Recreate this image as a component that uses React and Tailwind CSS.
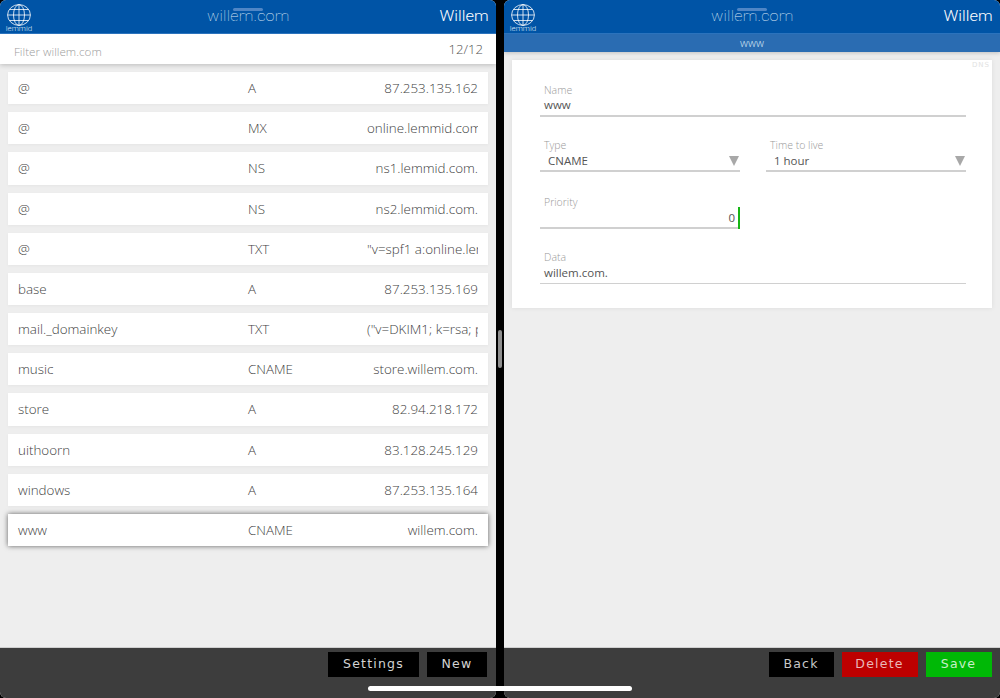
const records = [
  ["@", "A", "87.253.135.162"],
  ["@", "MX", "online.lemmid.com."],
  ["@", "NS", "ns1.lemmid.com."],
  ["@", "NS", "ns2.lemmid.com."],
  ["@", "TXT", "\"v=spf1 a:online.lemmid.com -all\""],
  ["base", "A", "87.253.135.169"],
  ["mail._domainkey", "TXT", "(\"v=DKIM1; k=rsa; p=MIGfMA0GCSq"],
  ["music", "CNAME", "store.willem.com."],
  ["store", "A", "82.94.218.172"],
  ["uithoorn", "A", "83.128.245.129"],
  ["windows", "A", "87.253.135.164"],
  ["www", "CNAME", "willem.com."],
];

const Globe = () => (
  <svg width="24" height="22" viewBox="0 0 24 22" fill="none" stroke="white" strokeWidth="0.8" className="block">
    <ellipse cx="12" cy="11" rx="11.4" ry="10.4" />
    <ellipse cx="12" cy="11" rx="5.5" ry="10.4" />
    <path d="M12 .6v20.8M.6 11h22.8M2.6 5.5h18.8M2.6 16.5h18.8" />
  </svg>
);

const Header = () => (
  <div className="relative flex h-[34px] items-center justify-between border-b border-[#2b73bd] bg-[#0054a6] pl-[7px] pr-[7px] text-white">
    <div className="flex w-[24px] flex-col items-center pt-[3px]">
      <Globe />
      <span className="mt-[-1px] font-['Roboto',sans-serif] text-[8px] leading-[8px] font-light text-[#dce8f5]">lemmid</span>
    </div>
    <span className="absolute left-[207px] top-[7px] origin-left scale-x-[1.05] font-['Roboto',sans-serif] text-[15.5px] leading-[19px] font-thin tracking-[0.2px] text-[#dbe7f4]">
      willem.com
    </span>
    <div className="absolute left-[233px] top-[8px] h-[3px] w-[30px] rounded-full bg-[#4f86c6]" />
    <span className="origin-right scale-x-[1.1] font-['Roboto',sans-serif] text-[15px] leading-[19px] font-light">Willem</span>
  </div>
);

const ActionButton = ({ label, className }) => (
  <button className={`flex h-[25px] items-center justify-center font-['DejaVu_Sans',sans-serif] text-[12.5px] font-normal tracking-[1.2px] ${className}`}>
    {label}
  </button>
);

const Field = ({ label, className, children }) => (
  <div className={className}>
    <div className="pl-[4px] font-['Open_Sans',sans-serif] text-[10.5px] leading-[14px] font-light text-[#9a9a9a]">{label}</div>
    {children}
  </div>
);

const Caret = () => <div className="h-0 w-0 border-x-[5.5px] border-t-[10px] border-x-transparent border-t-[#a8a8a8]" />;

const SelectField = ({ label, value, className }) => (
  <Field label={label} className={className}>
    <div className="flex h-[20px] items-center justify-between border-b-2 border-[#d0d0d0] pl-[8px] pr-[1px] text-[11.5px] text-[#555]">
      <span className="leading-[16px]">{value}</span>
      <Caret />
    </div>
  </Field>
);

export default function App() {
  return (
    <div className="relative flex h-[698px] w-[1000px] justify-between overflow-hidden bg-black font-['Open_Sans',sans-serif]">
      <div className="flex w-[496px] flex-col overflow-hidden rounded-[6px] bg-[#eeeeee]">
        <Header />
        <div className="flex h-[30px] items-center justify-between bg-white pl-[14px] pr-[13px] shadow-[0_1px_5px_rgba(0,0,0,0.22)]">
          <span className="pt-[6px] text-[11.7px] font-light text-[#9c9c9c]">Filter willem.com</span>
          <span className="pt-[2px] text-[13.2px] font-light text-[#555]">12/12</span>
        </div>
        <div className="flex flex-1 flex-col gap-[8px] px-[8px] pt-[8px]">
          {records.map(([name, type, data], index) => (
            <div
              key={index}
              className={`flex h-[32.18px] items-center bg-white pl-[10px] pr-[10px] text-[13.4px] font-light text-[#3f3f3f] ${
                name === "www" ? "shadow-[0_0_5px_rgba(0,0,0,0.6)]" : "shadow-[0_1px_3px_rgba(0,0,0,0.04)]"
              }`}
            >
              <span className="w-[230px]">{name}</span>
              <span className="flex-1">{type}</span>
              <span className="w-[111px] overflow-hidden text-right whitespace-nowrap">{data}</span>
            </div>
          ))}
        </div>
        <div className="flex h-[51px] justify-end gap-[8px] border-t border-[#cfcfcf] bg-[#3d3d3d] pr-[9px] pt-[4px]">
          <ActionButton label="Settings" className="w-[91px] bg-black text-[#d4d4d4]" />
          <ActionButton label="New" className="w-[60px] bg-black text-[#d4d4d4]" />
        </div>
      </div>

      <div className="flex w-[496px] flex-col overflow-hidden rounded-[6px] bg-[#eeeeee]">
        <Header />
        <div className="flex h-[18px] items-center justify-center bg-[#2a6cb2] text-[11px] font-light text-[#d8e6f4] shadow-[0_1px_4px_rgba(0,0,0,0.2)]">
          www
        </div>
        <div className="px-[8px] pt-[8px]">
          <div className="relative flex h-[248px] flex-col bg-white pl-[28px] pr-[26px] pt-[23px] shadow-[0_0_5px_rgba(0,0,0,0.08)]">
            <span className="absolute right-[2px] top-[1px] font-['DejaVu_Sans',sans-serif] text-[7px] leading-[8px] tracking-[1px] text-[#e2e2e2]">DNS</span>
            <Field label="Name">
              <div className="h-[20px] border-b-2 border-[#d0d0d0] pl-[4px] text-[11.5px] leading-[16px] text-[#555]">www</div>
            </Field>
            <div className="mt-[21px] flex gap-[26px]">
              <SelectField label="Type" value="CNAME" className="w-[200px]" />
              <SelectField label="Time to live" value="1 hour" className="w-[200px]" />
            </div>
            <Field label="Priority" className="mt-[23px] w-[200px]">
              <div className="relative h-[20px] border-b-2 border-[#d0d0d0] pr-[5px] text-right text-[11.5px] leading-[18px] text-[#555]">
                0
                <div className="absolute right-0 top-[-2px] h-[22px] w-[2px] bg-[#16b516]" />
              </div>
            </Field>
            <Field label="Data" className="mt-[21px]">
              <div className="h-[20px] border-b-[1.5px] border-[#d0d0d0] pl-[4px] text-[11.5px] leading-[17px] text-[#555]">willem.com.</div>
            </Field>
          </div>
        </div>
        <div className="flex-1" />
        <div className="flex h-[51px] justify-end gap-[8px] border-t border-[#cfcfcf] bg-[#3d3d3d] pr-[8.5px] pt-[4px]">
          <ActionButton label="Back" className="w-[65px] bg-black text-[#c8c8c8]" />
          <ActionButton label="Delete" className="w-[76px] bg-[#bd0000] text-[#eab8b8]" />
          <ActionButton label="Save" className="w-[66px] bg-[#00b806] text-[#c8efc8]" />
        </div>
      </div>

      <div className="absolute left-[498px] top-[330px] h-[38px] w-[4px] rounded-full bg-[#8f8f8f]" />
      <div className="absolute bottom-[7px] left-[368px] h-[5px] w-[264px] rounded-full bg-white" />
    </div>
  );
}
